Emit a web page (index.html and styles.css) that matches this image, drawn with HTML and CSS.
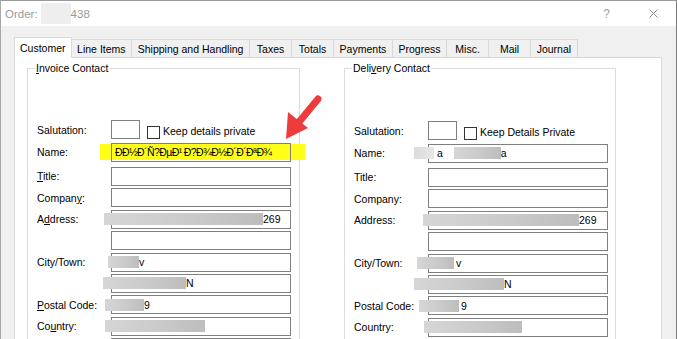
FILE: index.html
```html
<!DOCTYPE html>
<html>
<head>
<meta charset="utf-8">
<title>Order 438</title>
<link rel="stylesheet" href="styles.css">
</head>
<body>
<div class="window">
  <div class="titlebar">
    <span class="title-text">Order:</span><span class="title-redact"></span><span class="title-text">438</span>
    <div class="title-controls">
      <span class="help">?</span>
      <svg class="close" width="9" height="9" viewBox="0 0 9 9"><path d="M0.5 0.5 L8.5 8.5 M8.5 0.5 L0.5 8.5" stroke="#8c8c8c" stroke-width="1" fill="none"/></svg>
    </div>
  </div>
  <div class="dialog">
    <div class="tabs">
      <div class="tab tab--active">Customer</div>
      <div class="tab">Line Items</div>
      <div class="tab">Shipping and Handling</div>
      <div class="tab">Taxes</div>
      <div class="tab">Totals</div>
      <div class="tab">Payments</div>
      <div class="tab">Progress</div>
      <div class="tab">Misc.</div>
      <div class="tab">Mail</div>
      <div class="tab">Journal</div>
    </div>
    <div class="panel">
      <div class="group">
        <div class="group-title"><u>I</u>nvoice Contact</div>
        <div class="fields">
          <div class="row row--sal">
            <div class="label">Salutation:</div>
            <div class="field field--short"></div>
            <div class="check"></div>
            <div class="check-label">Keep details private</div>
          </div>
          <div class="row row--name">
            <div class="label">Name:</div>
            <div class="highlight"></div>
            <div class="field field--marked">ÐÐ½Ð´Ñ?ÐµÐ¹ Ð?Ð¾Ð½Ð´Ð´ÐªÐ¾</div>
          </div>
          <div class="row">
            <div class="label"><u>T</u>itle:</div>
            <div class="field"></div>
          </div>
          <div class="row">
            <div class="label">Compan<u>y</u>:</div>
            <div class="field"></div>
          </div>
          <div class="row">
            <div class="label">A<u>d</u>dress:</div>
            <div class="field"><span class="rd rd-l-addr"></span>269</div>
          </div>
          <div class="row">
            <div class="label"></div>
            <div class="field"></div>
          </div>
          <div class="row">
            <div class="label">City/Town:</div>
            <div class="field"><span class="rd rd-l-city"></span>v</div>
          </div>
          <div class="row">
            <div class="label"></div>
            <div class="field"><span class="rd rd-l-city2"></span>N</div>
          </div>
          <div class="row">
            <div class="label"><u>P</u>ostal Code:</div>
            <div class="field"><span class="rd rd-l-post"></span>9</div>
          </div>
          <div class="row">
            <div class="label">Co<u>u</u>ntry:</div>
            <div class="field"><span class="rd rd-l-country"></span></div>
          </div>
          <div class="row">
            <div class="label"></div>
            <div class="field"></div>
          </div>
        </div>
      </div>
      <div class="group group--delivery">
        <div class="group-title">Deli<u>v</u>ery Contact</div>
        <div class="fields">
          <div class="row row--sal">
            <div class="label">Salutation:</div>
            <div class="field field--short"></div>
            <div class="check"></div>
            <div class="check-label">Keep Details Private</div>
          </div>
          <div class="row row--name">
            <div class="label">Name:</div>
            <div class="field"><span class="rd rd-r-name1"></span>a<span class="rd rd-r-name2"></span>a</div>
          </div>
          <div class="row">
            <div class="label">Title:</div>
            <div class="field"></div>
          </div>
          <div class="row">
            <div class="label">Company:</div>
            <div class="field"></div>
          </div>
          <div class="row">
            <div class="label">Address:</div>
            <div class="field"><span class="rd rd-r-addr"></span>269</div>
          </div>
          <div class="row">
            <div class="label"></div>
            <div class="field"></div>
          </div>
          <div class="row">
            <div class="label">City/Town:</div>
            <div class="field"><span class="rd rd-r-city"></span>v</div>
          </div>
          <div class="row">
            <div class="label"></div>
            <div class="field"><span class="rd rd-r-city2"></span>N</div>
          </div>
          <div class="row">
            <div class="label">Postal Code:</div>
            <div class="field"><span class="rd rd-r-post"></span>9</div>
          </div>
          <div class="row">
            <div class="label">Country:</div>
            <div class="field"><span class="rd rd-r-country"></span></div>
          </div>
          <div class="row">
            <div class="label"></div>
            <div class="field"></div>
          </div>
        </div>
      </div>
    </div>
  </div>
  <svg class="arrow" width="45" height="52" viewBox="0 0 45 52">
    <path d="M38 7 L19 30" stroke="#ee3c3c" stroke-width="7" stroke-linecap="round" fill="none"/>
    <polygon points="8,20 28,36 6,47" fill="#ee3c3c"/>
  </svg>
</div>
</body>
</html>
```
FILE: styles.css
```css
html, body {
  margin: 0;
  padding: 0;
}
body {
  width: 677px;
  height: 339px;
  overflow: hidden;
  font-family: "Liberation Sans", Arial, sans-serif;
  font-size: 10.5px;
  color: #000;
  background: #f0f0f0;
}
.window {
  position: relative;
  height: 339px;
  box-sizing: border-box;
  border-top: 1px solid #9a9a9a;
  border-left: 1px solid #a8a8a8;
  border-right: 1px solid #7c7c7c;
  background: #f0f0f0;
  display: flex;
  flex-direction: column;
  overflow: hidden;
}
.titlebar {
  height: 25px;
  flex: none;
  background: #fff;
  display: flex;
  align-items: center;
  padding-left: 4px;
  padding-right: 18px;
  color: #9a9a9a;
  font-size: 11.5px;
}
.title-redact {
  display: inline-block;
  width: 30px;
  height: 21px;
  background: #eeeeee;
  margin-left: 3px;
}
.title-controls {
  margin-left: auto;
  display: flex;
  align-items: center;
}
.help {
  font-size: 12px;
  color: #a0a0a0;
  margin-right: 39px;
}
.close {
  display: block;
}
.dialog {
  flex: 1;
  display: flex;
  flex-direction: column;
  padding: 11px 0 0 13px;
  min-height: 0;
}
.tabs {
  display: flex;
  align-items: flex-end;
  height: 20px;
  flex: none;
  position: relative;
  z-index: 2;
}
.tab {
  height: 18px;
  box-sizing: border-box;
  border: 1px solid #d9d9d9;
  border-bottom: none;
  margin-left: -1px;
  padding: 0 5.6px;
  min-width: 43px;
  display: flex;
  align-items: center;
  justify-content: center;
  background: #f0f0f0;
  white-space: nowrap;
}
.tab--active {
  margin-left: 0;
  height: 21px;
  margin-bottom: -1px;
  padding: 0 5px 1px;
  background: #fff;
  position: relative;
  z-index: 3;
}
.panel {
  width: 648px;
  flex: 1;
  box-sizing: border-box;
  background: #fff;
  border: 1px solid #d9d9d9;
  display: flex;
  align-items: flex-start;
  gap: 44px;
  padding: 10px 0 0 12px;
}
.group {
  width: 273px;
  box-sizing: border-box;
  border: 1px solid #dcdcdc;
  height: 400px;
}
.group--delivery {
  width: 272px;
}
.group-title {
  display: block;
  width: max-content;
  background: #fff;
  line-height: 13px;
  padding: 0 1px;
  margin: -7px 0 0 7px;
}
.fields {
  display: flex;
  flex-direction: column;
  gap: 2.4px;
  margin-top: 45px;
}
.group--delivery .fields {
  margin-top: 46px;
}
.row {
  display: flex;
  align-items: center;
  height: 19px;
  position: relative;
}
.row--sal {
  margin-bottom: 1.6px;
}
.row--name {
  margin-bottom: 2.6px;
}
.label {
  width: 74px;
  padding-left: 9px;
  flex: none;
  white-space: nowrap;
}
.field {
  width: 180px;
  height: 19px;
  box-sizing: border-box;
  border: 1px solid #7f7f7f;
  background: #fff;
  padding: 0 3px;
  display: flex;
  align-items: center;
  white-space: nowrap;
  flex: none;
}
.field--short {
  width: 29px;
}
.field--marked {
  background: transparent;
  position: relative;
  letter-spacing: -0.6px;
  overflow: hidden;
}
.highlight {
  position: absolute;
  left: 72px;
  top: 1px;
  width: 205px;
  height: 16px;
  background: #ffff1a;
}
.check {
  width: 13px;
  height: 13px;
  box-sizing: border-box;
  border: 1px solid #333;
  background: #fff;
  margin: 5px 3px 0 7px;
  flex: none;
}
.check-label {
  white-space: nowrap;
  margin-top: 2px;
}
.rd {
  display: inline-block;
  height: 12px;
  flex: none;
  background: linear-gradient(90deg, #d6d6d6, #cacaca 55%, #bdbdbd);
  filter: blur(0.6px);
}
.rd-l-addr { margin-left: -11px; width: 159px; }
.rd-l-city { margin-left: -7px; width: 31px; }
.rd-l-city2 { margin-left: -12px; width: 83px; }
.rd-l-post { margin-left: -10px; width: 39px; }
.rd-l-country { margin-left: -10px; width: 100px; }
.rd-r-name1 { margin-left: -18px; width: 20px; margin-right: 3px; background: linear-gradient(90deg, #dcdcdc, #e6e6e6); }
.rd-r-name2 { margin-left: 11px; width: 47px; }
.rd-r-addr { margin-left: -9px; width: 156px; }
.rd-r-city { margin-left: -15px; width: 37px; margin-right: 2px; }
.rd-r-city2 { margin-left: -18px; width: 90px; }
.rd-r-post { margin-left: -13px; width: 40px; margin-right: 2px; }
.rd-r-country { margin-left: -8px; width: 98px; }
.arrow {
  position: absolute;
  left: 279px;
  top: 91px;
  z-index: 5;
}
```
